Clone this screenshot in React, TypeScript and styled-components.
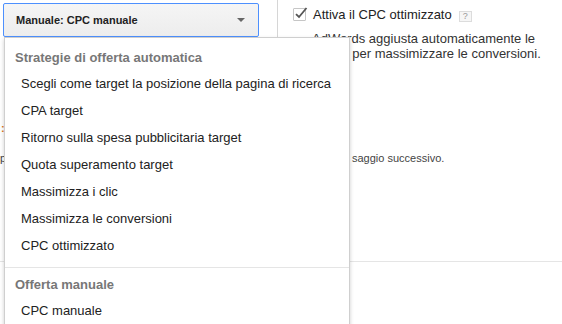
import styled, { createGlobalStyle } from "styled-components";

const GlobalStyle = createGlobalStyle`
  html, body {
    margin: 0;
    padding: 0;
    background: #ffffff;
  }
  body {
    font-family: Arial, "Liberation Sans", sans-serif;
    color: #222;
  }
`;

const Page = styled.div`
  position: relative;
  width: 562px;
  height: 324px;
  overflow: hidden;
  background: #fff;
`;

const TopRow = styled.div`
  display: flex;
  height: 120px;
`;

const LeftCol = styled.div`
  width: 278px;
  height: 40px;
  box-sizing: border-box;
  padding: 3px 0 0 3px;
  border-right: 1px solid #d6d6d6;
`;

const SelectButton = styled.div`
  width: 256px;
  height: 34px;
  box-sizing: border-box;
  display: flex;
  align-items: center;
  justify-content: space-between;
  padding: 0 12px;
  border: 1px solid #4d90fe;
  border-radius: 2px;
  background: linear-gradient(#f5f5f5, #ededed);
  font-size: 11px;
  font-weight: bold;
  color: #222;
`;

const Caret = styled.span`
  width: 0;
  height: 0;
  border-left: 4px solid transparent;
  border-right: 4px solid transparent;
  border-top: 4px solid #666;
  margin-right: 1px;
`;

const RightCol = styled.div`
  flex: 1;
  padding: 8px 0 0 15px;
`;

const CheckRow = styled.div`
  display: flex;
  align-items: center;
  gap: 7px;
  font-size: 13px;
  color: #222;
  height: 13px;
`;

const Box = styled.span`
  position: relative;
  width: 11px;
  height: 11px;
  border: 1px solid #c6c6c6;
  border-radius: 1px;
  background: #fff;
  display: inline-block;
`;

const Tick = styled.svg`
  position: absolute;
  left: 0;
  top: -3px;
`;

const Help = styled.span`
  width: 11px;
  height: 9px;
  margin-top: 4px;
  border: 1px solid #dcdcdc;
  background: #f6f6f6;
  color: #999;
  font-size: 9px;
  line-height: 9px;
  text-align: center;
`;

const Desc = styled.p`
  margin: 10px 0 0 19px;
  font-size: 13px;
  line-height: 15px;
  color: #333;
  white-space: nowrap;
`;

const Warn = styled.div`
  position: absolute;
  left: 1px;
  top: 122px;
  font-size: 11px;
  font-weight: bold;
  color: #dd7722;
`;

const NoteRow = styled.div`
  display: flex;
  margin-top: 32px;
  font-size: 11px;
  line-height: 13px;
  color: #444;
  white-space: nowrap;
`;

const NoteLead = styled.span`
  width: 352px;
  overflow: hidden;
  flex-shrink: 0;
`;

const Rule = styled.div`
  margin-top: 96px;
  border-top: 1px solid #e5e5e5;
`;

const Menu = styled.div`
  position: absolute;
  top: 37px;
  left: 4px;
  width: 346px;
  height: 300px;
  box-sizing: border-box;
  background: #fff;
  border: 1px solid #cfcfcf;
  box-shadow: 0 2px 4px rgba(0, 0, 0, 0.2);
`;

const Group = styled.div<{ $top: number; $bottom: number; $divided?: boolean }>`
  padding: ${(p) => p.$top}px 0 ${(p) => p.$bottom}px;
  border-top: ${(p) => (p.$divided ? "1px solid #e5e5e5" : "none")};
`;

const GroupTitle = styled.div`
  height: 24px;
  line-height: 24px;
  padding-left: 10px;
  font-size: 13px;
  font-weight: bold;
  color: #777;
`;

const Item = styled.div`
  height: 27px;
  line-height: 27px;
  padding-left: 16px;
  font-size: 13px;
  color: #222;
  white-space: nowrap;
`;

const automatic = [
  "Scegli come target la posizione della pagina di ricerca",
  "CPA target",
  "Ritorno sulla spesa pubblicitaria target",
  "Quota superamento target",
  "Massimizza i clic",
  "Massimizza le conversioni",
  "CPC ottimizzato",
];

export default function App() {
  return (
    <Page>
      <GlobalStyle />
      <TopRow>
        <LeftCol>
          <SelectButton>
            <span>Manuale: CPC manuale</span>
            <Caret />
          </SelectButton>
        </LeftCol>
        <RightCol>
          <CheckRow>
            <Box>
              <Tick width="14" height="14" viewBox="0 0 14 14">
                <path
                  d="M2 8.2 L5 11 L12.5 2"
                  fill="none"
                  stroke="#555"
                  strokeWidth="1.8"
                />
              </Tick>
            </Box>
            <span>Attiva il CPC ottimizzato</span>
            <Help>?</Help>
          </CheckRow>
          <Desc>
            AdWords aggiusta automaticamente le
            <br />
            offerte per massimizzare le conversioni.
          </Desc>
        </RightCol>
      </TopRow>

      <Warn>:</Warn>
      <NoteRow>
        <NoteLead>
          pi Potrai scegliere una strategia di offerta diversa nel pas
        </NoteLead>
        <span>saggio successivo.</span>
      </NoteRow>
      <Rule />

      <Menu>
        <Group $top={8} $bottom={8}>
          <GroupTitle>Strategie di offerta automatica</GroupTitle>
          {automatic.map((label) => (
            <Item key={label}>{label}</Item>
          ))}
        </Group>
        <Group $top={5} $bottom={0} $divided>
          <GroupTitle>Offerta manuale</GroupTitle>
          <Item>CPC manuale</Item>
        </Group>
      </Menu>
    </Page>
  );
}
